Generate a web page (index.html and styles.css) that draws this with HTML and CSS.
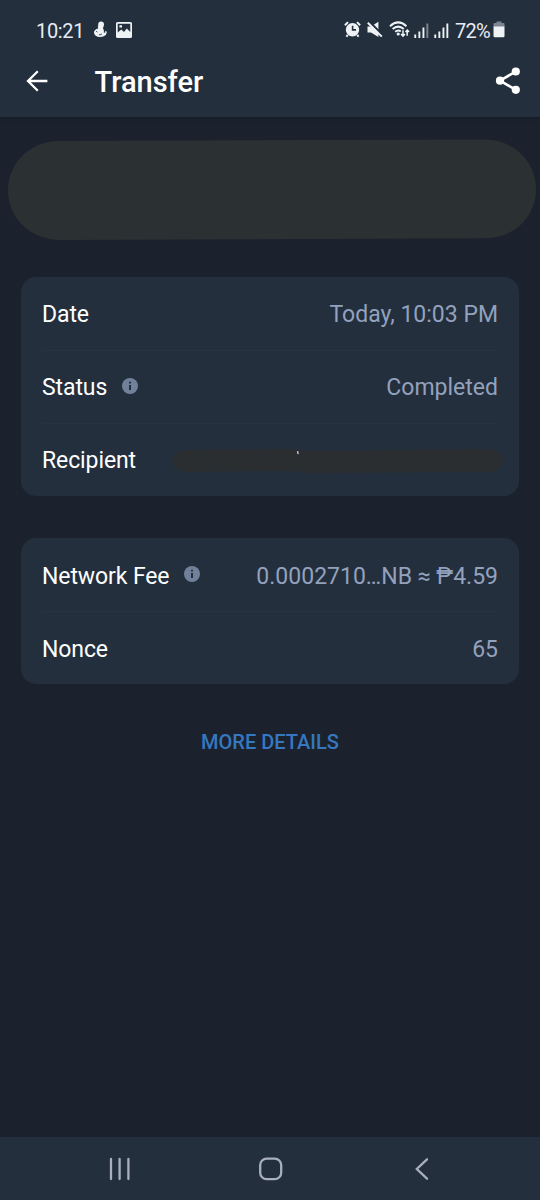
FILE: index.html
```html
<!DOCTYPE html>
<html lang="en">
<head>
<meta charset="utf-8">
<title>Transfer</title>
<link rel="stylesheet" href="styles.css">
</head>
<body>
<div class="screen">
  <div class="top">
    <div class="status-bar">
      <span class="clock">10:21</span>
      <svg class="buddy" width="15" height="17" viewBox="0 0 15 17">
        <circle cx="8.1" cy="3.4" r="2.9"/>
        <path d="M4.8 4.4L10.4 5L10 7.4C11 8.8 11.1 10 10.8 11.8L12.4 11.4L12 9.8L13.8 10.8C13.8 13.8 11.5 16 7.5 16C3.5 16 1 14 1 11.2C1 9.4 2.6 8 5.2 7.4Z"/>
        <path class="cut" d="M3.2 10.2L4.3 11M6 13.6C7 14 8.2 13.6 9 12.8"/>
      </svg>
      <svg class="photo" width="16" height="16" viewBox="0 0 16 16">
        <path fill-rule="evenodd" d="M1.5 0H14.5Q16 0 16 1.5V14.5Q16 16 14.5 16H1.5Q0 16 0 14.5V1.5Q0 0 1.5 0ZM1.7 1.7V10.4L5.3 7.6L8 10L10.8 6.4L14.3 10V1.7ZM3.4 3.2H6V5.5H3.4Z"/>
      </svg>
      <div class="indicators">
        <svg width="17" height="17" viewBox="0 0 17 17">
          <path fill-rule="evenodd" d="M8.5 2A6.7 6.7 0 1 1 8.5 15.4A6.7 6.7 0 1 1 8.5 2ZM7.8 4.8V9.7H12V8.1H9.4V4.8Z"/>
          <path class="line" d="M.9 4.2L4 1.1M16.1 4.2L13 1.1M3.7 13.9L2.5 15.8M13.3 13.9L14.5 15.8"/>
        </svg>
        <svg class="mute" width="16" height="17" viewBox="0 0 16 17">
          <path d="M.5 5.4H4L11.4 .8V16L4 11.6H.5Z"/>
          <path class="cut-wide" d="M2.4 .8L15.6 14"/>
          <path class="line" d="M.8 1.8L14.8 15.6"/>
        </svg>
        <svg class="wifi" width="21" height="17" viewBox="0 0 21 17">
          <path class="line" d="M1 5.2Q9.2-2.4 17.4 5.2M3.6 8.1Q9.2 3.1 14.8 8.1M6.2 10.8Q9.2 8.3 11.8 10.5"/>
          <circle cx="9.2" cy="13" r="1.6"/>
          <path class="thin" d="M14 9.3V15M12 13L14 15.1L16 13M18.2 14.8V9.2M16.5 10.9L18.2 9.1L20.1 10.9"/>
        </svg>
        <svg class="signal" width="15" height="16" viewBox="0 0 15 16">
          <path d="M.3 12.5H2.2V16H.3ZM4.4 9.5H6.3V16H4.4ZM8.5 5.5H10.4V16H8.5Z"/>
          <path class="dim" d="M12.4 1.5H14.3V16H12.4Z"/>
        </svg>
        <svg class="signal second" width="15" height="16" viewBox="0 0 15 16">
          <path d="M.3 12.5H2.2V16H.3ZM4.4 9.5H6.3V16H4.4ZM8.5 5.5H10.4V16H8.5ZM12.4 1.5H14.3V16H12.4Z"/>
        </svg>
        <span class="percent">72%</span>
        <svg class="battery" width="12" height="17" viewBox="0 0 12 17">
          <path class="dim" d="M3.5 .5H8.5V2H10.5Q11.5 2 11.5 3V6H.5V3Q.5 2 1.5 2H3.5Z"/>
          <path d="M.5 5.5H11.5V15Q11.5 16.3 10.2 16.3H1.8Q.5 16.3 .5 15Z"/>
        </svg>
      </div>
    </div>
    <header class="app-bar">
      <svg class="back" width="24" height="24" viewBox="0 0 24 24"><path d="M22.4 12H3M12.8 2.3L3 12L12.8 21.7"/></svg>
      <h1 class="title">Transfer</h1>
      <svg class="share" width="28" height="28" viewBox="0 0 28 28">
        <path d="M21.8 4.5L6 13.7L21.8 22.8"/>
        <circle cx="21.8" cy="4.5" r="4.1"/><circle cx="6" cy="13.7" r="4.1"/><circle cx="21.8" cy="22.8" r="4.1"/>
      </svg>
    </header>
  </div>
  <main class="content">
    <svg class="amount-cover" width="528" height="102" viewBox="0 0 528 102">
      <path d="M51 2L477 .5C505 .5 528 22 528 50C528 78 506 99.3 477 99.3L53 101C23 101 0 80 0 51.5C0 24 22 2 51 2Z"/>
    </svg>
    <section class="card">
      <div class="row"><span class="label">Date</span><span class="value">Today, 10:03 PM</span></div>
      <div class="row"><span class="label">Status</span>
        <svg class="info" width="16" height="16" viewBox="0 0 16 16"><circle cx="8" cy="8" r="8"/><path d="M7 3.7H9V5.6H7ZM7 7H9V12H7Z"/></svg>
        <span class="value">Completed</span></div>
      <div class="row"><span class="label">Recipient</span>
        <svg class="recipient-cover" width="334" height="28" viewBox="0 0 334 28">
          <path class="smudge" d="M14 4L121 3L137 5L318 3C337 4 338 24 320 26L139 27L119 25L14 26C-2 23-2 7 14 4Z"/>
          <path class="tick" d="M127.5 5.2L128.2 8.2"/>
        </svg>
      </div>
    </section>
    <section class="card">
      <div class="row"><span class="label">Network Fee</span>
        <svg class="info" width="16" height="16" viewBox="0 0 16 16"><circle cx="8" cy="8" r="8"/><path d="M7 3.7H9V5.6H7ZM7 7H9V12H7Z"/></svg>
        <span class="value">0.0002710…NB ≈ ₱4.59</span></div>
      <div class="row"><span class="label">Nonce</span><span class="value">65</span></div>
    </section>
    <a class="more">MORE DETAILS</a>
  </main>
  <nav class="nav-bar">
    <svg width="24" height="24" viewBox="0 0 24 24"><path d="M3 2V22M11.6 2V22M20.4 2V22"/></svg>
    <svg width="24" height="24" viewBox="0 0 24 24"><rect x="1.2" y="1.6" width="21" height="20.6" rx="6.5"/></svg>
    <svg width="24" height="24" viewBox="0 0 24 24"><path d="M18 2.3L7.8 12L18 21.7"/></svg>
  </nav>
</div>
</body>
</html>
```

FILE: styles.css
```css
* { box-sizing: border-box; }
body { margin: 0; background: #1b222d; font-family: Roboto, "Noto Sans", sans-serif; }
svg { display: block; flex: none; }
.screen { width: 540px; height: 1200px; display: flex; flex-direction: column; overflow: hidden; }
.top { height: 117px; flex: none; background: #232f3d; box-shadow: 0 1px 3px #151b25; }
.status-bar { height: 59px; padding: 0 35px 0 36px; display: flex; align-items: center; color: #e8ecf2; fill: #eef2f5; font-size: 20px; white-space: nowrap; }
.clock { width: 57px; padding-top: 3px; letter-spacing: -.35px; }
.photo { margin-left: 8px; }
.indicators { margin-left: auto; display: flex; align-items: center; }
.mute { margin-left: 6px; }
.wifi { margin-left: 6px; }
.signal { margin-left: 4px; }
.second { margin-left: 5px; }
.percent { width: 37px; margin-left: 6px; padding-top: 3px; letter-spacing: -.8px; }
.battery { margin-left: 1px; }
.line, .thin { fill: none; stroke: #eef2f5; stroke-width: 2; }
.thin { stroke-width: 1.5; }
.cut, .cut-wide { fill: none; stroke: #232f3d; stroke-width: 1; }
.cut-wide { stroke-width: 2.2; }
.dim { fill: #7d8590; }
.app-bar { height: 44px; padding: 0 18px 0 25px; display: flex; align-items: center; }
.back { fill: none; stroke: #fff; stroke-width: 2.3; }
.title { margin: 0 auto 0 45.5px; padding-top: 2px; color: #fff; font-size: 29px; font-weight: 500; line-height: 40px; }
.share { fill: #fff; stroke: #fff; stroke-width: 2.6; }
.share circle { stroke: none; }
.share path { fill: none; }
.content { flex: 1; display: flex; flex-direction: column; align-items: center; }
.amount-cover { margin: 22px 0 35.5px 4px; fill: #2b3033; }
.card { width: 498px; margin-bottom: 42px; padding: 0 21px; border-radius: 15px; background: #232f3d; }
.row { height: 73.2px; display: flex; align-items: center; font-size: 23px; border-top: 1px solid #273341; }
.row:first-child { border-color: transparent; }
.label { color: #fff; padding-top: 2px; letter-spacing: -.1px; }
.value { margin-left: auto; padding-top: 2px; color: #93a1bd; white-space: nowrap; }
.info { margin: 0 0 2px 15px; fill: #72819a; }
.info path { fill: #232f3d; }
.recipient-cover { margin-left: auto; margin-right: -6px; }
.smudge { fill: #2b2e31; }
.tick { fill: none; stroke: #bdc6d8; stroke-width: 1.4; }
.more { margin-top: 3px; color: #3578c0; font-size: 20px; font-weight: 500; line-height: 26px; }
.nav-bar { height: 63px; flex: none; padding: 0 107px 0 108px; display: flex; align-items: center; justify-content: space-between; background: #232f3d; fill: none; stroke: #a9b0bc; stroke-width: 2.3; stroke-linecap: round; }
```
